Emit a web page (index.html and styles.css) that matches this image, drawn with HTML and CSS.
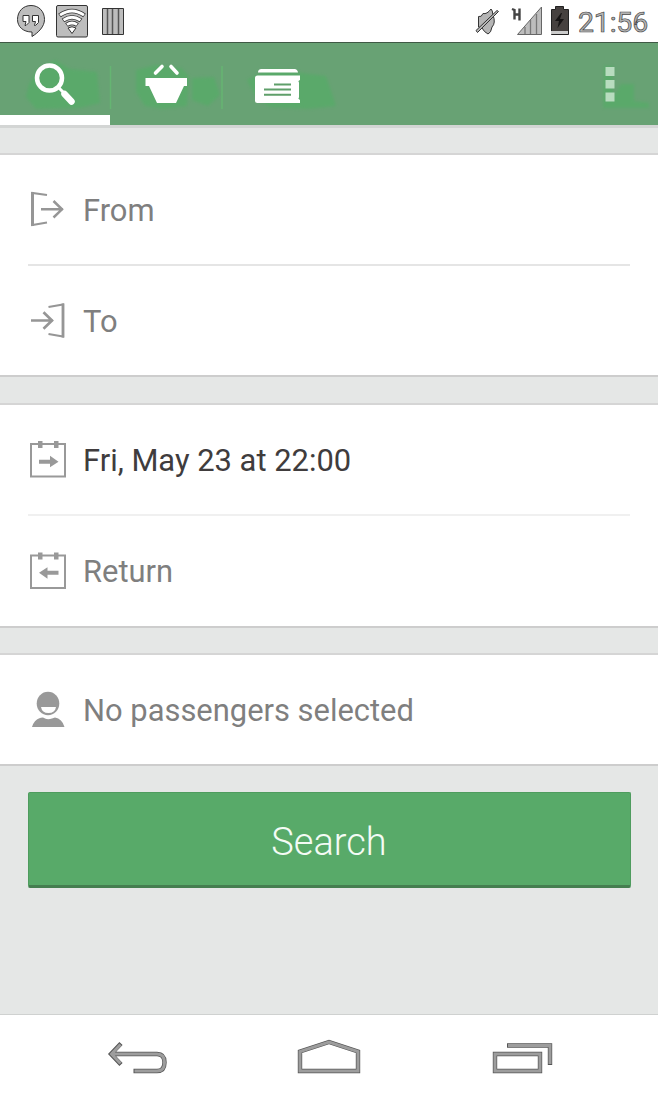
FILE: index.html
```html
<!DOCTYPE html>
<html lang="en">
<head>
<meta charset="utf-8">
<title>Search</title>
<link rel="stylesheet" href="styles.css">
</head>
<body>
<div class="screen">
  <div class="status">
    <svg class="notifications" width="130" height="42" viewBox="0 0 130 42">
      <g fill="#bdbdbd" stroke="#333" stroke-width="1">
        <path d="M31 5.500c8 0 13.500 6 13.500 14 0 7-6 13-12.500 17v-4.500c-9 0-14.500-5.500-14.500-12.500 0-8 5.500-14 13.500-14z"/>
        <rect x="56.500" y="5.500" width="31" height="31.500" rx="1.500"/>
        <path d="M102.500 8.500h21v26h-21z"/>
      </g>
      <path d="M23 15.500h6v7l-3 3h-1l1-4h-3zM32.500 15.500h6v7l-3 3h-1l1-4h-3z" fill="#fff" stroke="#333"/>
      <g fill="none" stroke="#333" stroke-width="4.500"><path d="M59.500 15.500q12.500-9 25 0M63 20.500q9-6.500 18 0M66.500 25q5.500-4 11 0"/></g>
      <g fill="none" stroke="#fff" stroke-width="2.800"><path d="M60 15.200q12-8.500 24 0M63.500 20.200q8.500-6 17 0M67 24.700q5-3.500 10 0"/></g>
      <path d="M68 28q4-2.500 8 0l-4 5.500z" fill="#fff" stroke="#333"/>
      <path d="M107.500 9v25M112.500 9v25M118.500 9v25" stroke="#555" stroke-width="1.500"/>
    </svg>
    <svg class="signals" width="108" height="42" viewBox="470 0 108 42">
      <g fill="#b5b5b5" stroke="#333">
        <path d="M478.500 16.500q3 1 4.500-3 4 1 8-4.500 1.500 1 2 6 3 8-1 12-1 6-4 7-4-2-6-6l-3.500-1z"/>
        <path d="M476 30.500l21-20 1.500 1-21 21z"/>
      </g>
      <path d="M512 9l2.500 1v9.500M519.500 8.500v12M514.500 14.500h5" fill="none" stroke="#444" stroke-width="2.400"/>
      <path d="M517.500 34.500l24-27.500v27.500z" fill="#bdbdbd" stroke="#666"/>
      <path d="M525 27v7M530.500 20v14M536.500 14v20" stroke="#777" stroke-width="1.300"/>
      <path d="M551.500 9.500h4v-3h8v3h5v25h-17z" fill="#46413f" stroke="#222"/>
      <path d="M551 31h17v3h-17z" fill="#ccc"/>
      <path d="M561 13l-6 8h4l-1.500 7 6.500-9h-4l2-6z" fill="#161414"/>
    </svg>
    <span class="clock">21:56</span>
  </div>

  <div class="bar">
    <svg class="bar-art" width="658" height="83" viewBox="0 42 658 83">
      <g class="glow">
        <path d="M37 70l18-10 15 9 27 3 3 31-20 5-44 1-10-12 3-13z"/>
        <path d="M136 70l20-5 25 3 8 8-2 30-25 3-17-3-9-14z"/>
        <path d="M192 78l22-1 6 18-12 11-16-6z"/>
        <path d="M247 80l25-12 37 6 17 2 10 30-28 3-38-2-14-10z"/>
        <path d="M604 66h9v32l8-14h13v17l15 2v5h-46z"/>
      </g>
      <path d="M110.500 66v43M222 66v43" stroke="#65b572" stroke-width="1.500"/>
      <circle cx="49.500" cy="78" r="12.500" fill="none" stroke="#fff" stroke-width="4.500"/>
      <path d="M58 87l5 5" stroke="#fff" stroke-width="3"/>
      <path d="M64.500 94l7 7.500" stroke="#fff" stroke-width="6.500" stroke-linecap="round"/>
      <path d="M155.500 73l6.500-6.500M171 66.500l6 6.500" stroke="#fff" stroke-width="3.600" stroke-linecap="round"/>
      <path d="M145.500 78h41.500v8h-3l-8 17h-19l-8-17h-3.500z" fill="#fff"/>
      <path d="M258 72.500q0-3.500 3.500-3.500h33q3 0 3.500 3.500zM255 78q0-2.500 2.500-2.500H300v4.500q-2.500 1 -1 2.500v15q-1.500 1 1 2.500v3h-42.500q-2.500 0-2.500-2.500z" fill="#fff"/>
      <path d="M274 84.500h17M264 89.500h27M264 94.800h27" stroke="#5f9f6a" stroke-width="2"/>
      <path d="M605.500 67h9v9h-9zM605.500 80h9v8.500h-9zM605.500 92.500h9v9h-9z" fill="#b8dcbf"/>
    </svg>
    <div class="tab-mark"></div>
  </div>

  <main class="form">
    <section class="card">
      <div class="row">
        <svg width="40" height="40" viewBox="28 190 40 40" fill="none" stroke="#969696"><path d="M47 195l-14.500-2v32l14.500-2.500" stroke-width="2.200"/><path d="M32.500 192v34" stroke-width="3"/><path d="M41 209.300h22M53.500 201l8.500 8.300-8.500 8.200" stroke-width="2.500"/></svg>
        <span>From</span>
      </div>
      <hr class="line">
      <div class="row">
        <svg width="40" height="40" viewBox="28 301 40 40" fill="none" stroke="#969696"><path d="M48.500 307l14.500-2.500v32L48.500 334" stroke-width="2.200"/><path d="M63 303.500v34" stroke-width="2.700"/><path d="M31 320.500h22M43.500 312.200l8.500 8.300-8.500 8.200" stroke-width="2.700"/></svg>
        <span>To</span>
      </div>
    </section>

    <section class="card">
      <div class="row chosen">
        <svg width="40" height="40" viewBox="28 440 40 40"><path d="M31 444h34v32.500H31z" fill="none" stroke="#999" stroke-width="2"/><path d="M38 441h4.500v7H38zM54 441h4.500v7H54z" fill="#999"/><path d="M39 459.800h11v-4l8.500 6-8.500 5.500v-3.500H39z" fill="#999"/></svg>
        <span>Fri, May 23 at 22:00</span>
      </div>
      <hr class="line faint">
      <div class="row last">
        <svg width="40" height="40" viewBox="28 551 40 40"><path d="M31 555.500h34V588H31z" fill="none" stroke="#999" stroke-width="2"/><path d="M38 552.500h4.500v7H38zM54 552.500h4.500v7H54z" fill="#999"/><path d="M58.500 570.800h-11v-3.500l-8.500 5.500 8.500 6v-4h11z" fill="#999"/></svg>
        <span>Return</span>
      </div>
    </section>

    <section class="card passengers">
      <div class="row">
        <svg width="40" height="40" viewBox="28 690 40 40"><ellipse cx="48" cy="703.500" rx="11.300" ry="11.700" fill="#999"/><path d="M41 707h15q-1 6-7.500 6t-7.500-6z" fill="#fff"/><path d="M32 727q2-7 8-9 3-1 5 .5 3 1.500 7 0l3-1q7 1 9.500 9.500z" fill="#999"/></svg>
        <span>No passengers selected</span>
      </div>
    </section>

    <button class="search">Search</button>
  </main>

  <nav class="nav">
    <svg width="658" height="82" viewBox="0 1015 658 82" fill="none">
      <g stroke="#555" stroke-width="4.400"><path d="M112 1054h45q7.500 0 7.500 8.500t-7.500 8.500h-23.500M121 1043.500l-10 10.500 10 10.500"/><path d="M300 1071v-19.500l29-9.500 29 9.500V1071z"/><path d="M507 1045.500h43V1065M495 1054h45v17h-45z"/></g>
      <g stroke="#9d9d9d" stroke-width="3"><path d="M113 1054h44q7.500 0 7.500 8.500t-7.500 8.500h-22.500M120.500 1044.500l-9 9.500 9 9.500"/><path d="M300 1071v-19.500l29-9.500 29 9.500V1071z"/><path d="M508 1045.500h42V1064M495 1054h45v17h-45z"/></g>
    </svg>
  </nav>
</div>
</body>
</html>
```
FILE: styles.css
```css
* { box-sizing: border-box; }
body { margin: 0; background: #fff; font-family: Roboto, "Liberation Sans", sans-serif; }
.screen { width: 658px; height: 1097px; display: flex; flex-direction: column; overflow: hidden; }
svg { display: block; flex: none; }

.status { height: 42px; flex: none; display: flex; align-items: center; padding-right: 9px; }
.signals { margin-left: auto; }
.clock {
  width: 71px; height: 42px; line-height: 45px; font-size: 28.5px; letter-spacing: -0.2px;
  color: #b5b5b5; -webkit-text-stroke: 0.7px #444; white-space: nowrap;
}

.bar { height: 83px; flex: none; background: #68a274; border-top: 1px solid #3f5945; display: flex; flex-direction: column; }
.bar-art { margin-top: -1px; }
.glow { fill: #57ab68; opacity: 0.8; filter: blur(1.5px); }
.tab-mark { width: 110px; height: 10px; margin-top: -10px; background: #fff; position: relative; flex: none; }

.form {
  flex: 1; background: #e5e7e6; border-top: 3px solid #d3d5d4; padding-top: 25px;
  display: flex; flex-direction: column; gap: 26px;
}
.card { background: #fff; border-top: 2px solid #d5d5d5; border-bottom: 2px solid #cdcdcd; flex: none; }
.passengers { margin-top: -1px; }
.row { height: 109px; padding: 35px 28px 0; display: flex; align-items: flex-start; gap: 15px; font-size: 30.9px; color: #7f7f7f; }
.last { height: 110px; }
.row span { line-height: 36px; margin-top: 3px; white-space: nowrap; }
.chosen { color: #403c3d; }
.line { height: 2px; width: 602px; margin: 0 28px; border: 0; background: #e5e5e5; }
.faint { background: #f0f0f0; }
.search {
  width: 603px; height: 96px; flex: none; margin: 0 0 0 27.5px; padding: 5px 0 0; border: 1px solid #4e9c5e;
  border-bottom: 3px solid #457e50; border-radius: 2px; background: #58aa69;
  color: #f4fbf5; font: 300 38px Roboto, "Liberation Sans", sans-serif;
}
.nav { height: 83px; flex: none; border-top: 1px solid #cfd1d0; background: #fff; }
```
